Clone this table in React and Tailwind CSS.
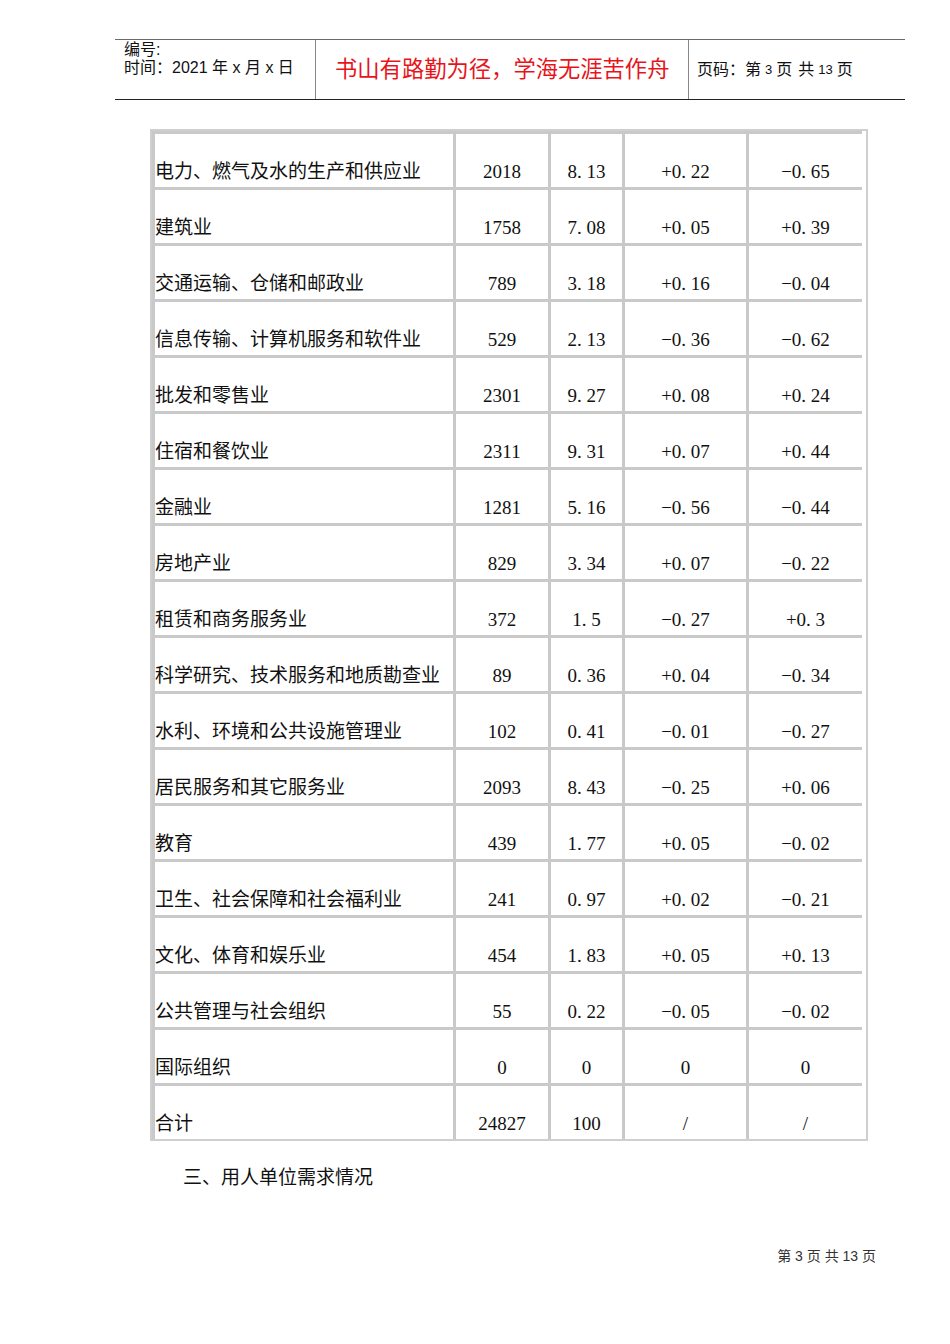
import React from 'react';

const rows = [
  ['电力、燃气及水的生产和供应业', '2018', '8. 13', '+0. 22', '−0. 65'],
  ['建筑业', '1758', '7. 08', '+0. 05', '+0. 39'],
  ['交通运输、仓储和邮政业', '789', '3. 18', '+0. 16', '−0. 04'],
  ['信息传输、计算机服务和软件业', '529', '2. 13', '−0. 36', '−0. 62'],
  ['批发和零售业', '2301', '9. 27', '+0. 08', '+0. 24'],
  ['住宿和餐饮业', '2311', '9. 31', '+0. 07', '+0. 44'],
  ['金融业', '1281', '5. 16', '−0. 56', '−0. 44'],
  ['房地产业', '829', '3. 34', '+0. 07', '−0. 22'],
  ['租赁和商务服务业', '372', '1. 5', '−0. 27', '+0. 3'],
  ['科学研究、技术服务和地质勘查业', '89', '0. 36', '+0. 04', '−0. 34'],
  ['水利、环境和公共设施管理业', '102', '0. 41', '−0. 01', '−0. 27'],
  ['居民服务和其它服务业', '2093', '8. 43', '−0. 25', '+0. 06'],
  ['教育', '439', '1. 77', '+0. 05', '−0. 02'],
  ['卫生、社会保障和社会福利业', '241', '0. 97', '+0. 02', '−0. 21'],
  ['文化、体育和娱乐业', '454', '1. 83', '+0. 05', '+0. 13'],
  ['公共管理与社会组织', '55', '0. 22', '−0. 05', '−0. 02'],
  ['国际组织', '0', '0', '0', '0'],
  ['合计', '24827', '100', '/', '/'],
];

const widths = ['w-[301px]', 'w-[95px]', 'w-[74px]', 'w-[124px]', 'w-[116px]'];

const serif = { fontFamily: '"Liberation Serif", "Noto Sans CJK SC", serif' };
const sans = { fontFamily: '"Liberation Sans", "Noto Sans CJK SC", sans-serif' };

function Row({ cells }) {
  return (
    <div className="flex h-[56px]">
      {cells.map((text, i) => (
        <div
          key={i}
          className={`${widths[i]} flex items-end border-t-[3px] border-l-[3px] border-[#c9c9c9] pb-[3px] ${
            i === 0 ? 'justify-start pl-0' : 'justify-center'
          }`}
        >
          <span className="text-[19px] leading-[24px] text-[#111]">{text}</span>
        </div>
      ))}
    </div>
  );
}

export default function App() {
  return (
    <div className="min-h-[1344px] w-[950px] bg-white" style={sans}>
      <header className="ml-[115px] mt-[39px] flex h-[61px] w-[790px] border-t border-b border-t-[#6b6b6b] border-b-[#222]">
        <div className="w-[201px] border-r border-[#888] pl-[9px] pt-[1px] text-[16px] leading-[18px] text-[#111]">
          <div>编号:</div>
          <div>时间：2021 年 x 月 x 日</div>
        </div>
        <div className="flex w-[373px] items-center border-r border-[#888] pl-[19px] text-[22.3px] text-[#e8141b]">
          书山有路勤为径，学海无涯苦作舟
        </div>
        <div className="flex flex-1 items-center pl-[8px] text-[16px] text-[#111]">
          <span>页码：第</span>
          <span className="mx-[4px] text-[13px]">3</span>
          <span>页</span>
          <span className="ml-[6px]">共</span>
          <span className="mx-[4px] text-[13px]">13</span>
          <span>页</span>
        </div>
      </header>

      <div
        className="ml-[150px] mt-[29px] w-[718px] border-[2px] border-[#cfcfcf] pr-[1px] bg-white"
        style={serif}
      >
        {rows.map((r) => (
          <Row key={r[0]} cells={r} />
        ))}
      </div>

      <p className="ml-[183px] mt-[25px] text-[19px] leading-[24px] text-[#111]" style={serif}>
        三、用人单位需求情况
      </p>

      <div className="mr-[74px] mt-[56px] text-right text-[14px] text-[#333]">
        第 3 页 共 13 页
      </div>
    </div>
  );
}
